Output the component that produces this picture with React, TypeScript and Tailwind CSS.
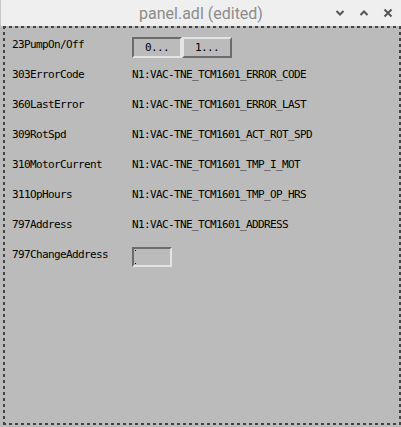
import React from "react";

const mono = "font-['DejaVu_Sans_Mono','Liberation_Mono',monospace] text-[11px] leading-[13px] tracking-[-0.62px] text-black";

const rows: [string, string][] = [
  ["303ErrorCode", "N1:VAC-TNE_TCM1601_ERROR_CODE"],
  ["360LastError", "N1:VAC-TNE_TCM1601_ERROR_LAST"],
  ["309RotSpd", "N1:VAC-TNE_TCM1601_ACT_ROT_SPD"],
  ["310MotorCurrent", "N1:VAC-TNE_TCM1601_TMP_I_MOT"],
  ["311OpHours", "N1:VAC-TNE_TCM1601_TMP_OP_HRS"],
  ["797Address", "N1:VAC-TNE_TCM1601_ADDRESS"],
];

function Row({ label, children }: { label: string; children: React.ReactNode }) {
  return (
    <div className="flex h-[30px] items-start">
      <div className={`w-[120px] mt-px whitespace-pre ${mono}`}>{label}</div>
      {children}
    </div>
  );
}

export default function App() {
  return (
    <div className="w-[401px] h-[427px] flex flex-col bg-[#d6d6d6] overflow-hidden">
      {/* title bar */}
      <div className="h-[26px] shrink-0 bg-[#efefef] border-l border-[#c8c8c8] flex items-center relative">
        <div className="flex-1 text-center font-['Roboto','Liberation_Sans',sans-serif] text-[16px] text-[#8c8c8c] pt-[1px]">
          panel.adl (edited)
        </div>
        <div className="absolute right-[8px] top-[8px] flex gap-[14px]">
          <svg width="10" height="10" viewBox="0 0 10 10">
            <path d="M1.5 3 L5 6.5 L8.5 3" fill="none" stroke="#555" strokeWidth="2" />
          </svg>
          <svg width="10" height="10" viewBox="0 0 10 10">
            <path d="M1.5 7 L5 3.5 L8.5 7" fill="none" stroke="#555" strokeWidth="2" />
          </svg>
          <svg width="10" height="10" viewBox="0 0 10 10">
            <path d="M1.5 1.5 L8.5 8.5 M8.5 1.5 L1.5 8.5" fill="none" stroke="#555" strokeWidth="2" />
          </svg>
        </div>
      </div>
      {/* panel */}
      <div className="flex-1 flex pl-[2px] pb-[2px] bg-[#bbbbbb]">
        <div className="flex-1 ml-px bg-no-repeat [background-image:repeating-linear-gradient(90deg,#444_0_3px,transparent_3px_6px),repeating-linear-gradient(90deg,#444_0_3px,transparent_3px_6px),repeating-linear-gradient(180deg,#444_0_3px,transparent_3px_6px),repeating-linear-gradient(180deg,#444_0_3px,transparent_3px_6px)] [background-size:100%_2px,100%_2px,2px_100%,2px_100%] [background-position:top_left,bottom_left,top_left,top_right] pt-[11px] pl-[9px]">
          <Row label="23PumpOn/Off">
            <div className="flex">
              <div className={`w-[50px] h-[21px] border-2 border-t-[#6b6b6b] border-l-[#6b6b6b] border-b-[#e4e4e4] border-r-[#e4e4e4] flex items-center justify-center ${mono}`}>
                0...
              </div>
              <div className={`w-[50px] h-[21px] border-2 border-t-[#e4e4e4] border-l-[#e4e4e4] border-b-[#6b6b6b] border-r-[#6b6b6b] flex items-center justify-center ${mono}`}>
                1...
              </div>
            </div>
          </Row>
          {rows.map(([l, v]) => (
            <Row key={l} label={l}>
              <div className={`mt-px ${mono}`}>{v}</div>
            </Row>
          ))}
          <Row label="797ChangeAddress">
            <div className="w-[40px] h-[20px] border-2 border-t-[#6b6b6b] border-l-[#6b6b6b] border-b-[#e4e4e4] border-r-[#e4e4e4] pl-[1px] pt-[1px]">
              <div className="w-px h-[14px] border-y border-black" />
            </div>
          </Row>
        </div>
      </div>
    </div>
  );
}
